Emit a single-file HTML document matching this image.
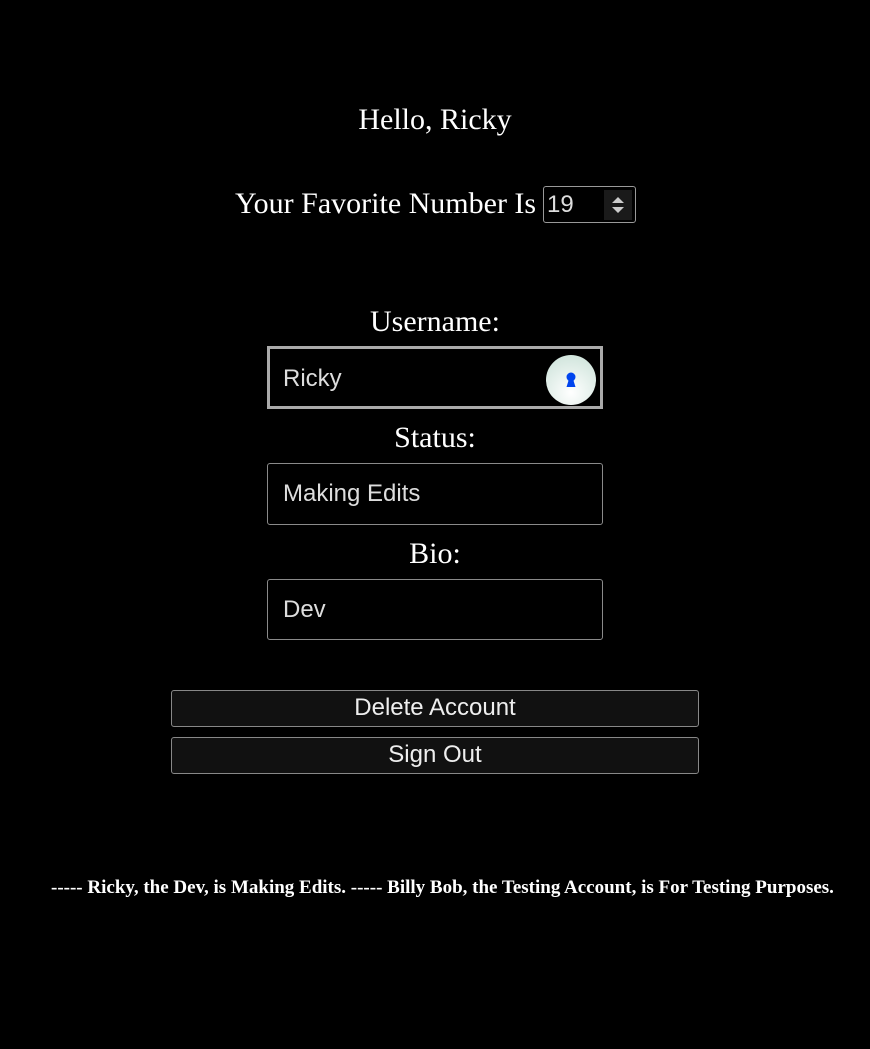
<!DOCTYPE html>
<html><head><style>
body{margin:0;background:#000;width:870px;height:1049px;position:relative;font-family:"Liberation Serif",serif;color:#fff;overflow:hidden}
.t{position:absolute;left:0;width:870px;text-align:center;white-space:nowrap}
.box{position:absolute;left:267px;width:336px;height:60px;border:1px solid #8a8a8a;border-radius:3px;box-sizing:border-box;font-family:"Liberation Sans",sans-serif;font-size:24px;color:#ddd;padding-left:15px;line-height:60px}
.btn{position:absolute;left:171px;width:528px;height:37px;background:#111;border:1px solid #888;border-radius:3px;box-sizing:border-box;font-family:"Liberation Sans",sans-serif;font-size:24px;text-align:center;line-height:33px;color:#eee}
</style></head><body>
<div class="t" style="top:103px;font-size:30px">Hello, Ricky</div>
<div style="position:absolute;left:235px;top:187px;font-size:30px;white-space:nowrap">Your Favorite Number Is</div>
<div style="position:absolute;left:543px;top:186px;width:93px;height:37px;border:1px solid #999;border-radius:3px;box-sizing:border-box;font-family:'Liberation Sans',sans-serif;font-size:24px;line-height:36px;padding-left:3px;color:#ddd">19
<div style="position:absolute;right:3px;top:3px;width:28px;height:30px;background:#1a1a1a"><svg width="28" height="30"><path d="M8 13 L14 7 L20 13Z M8 17 L14 23 L20 17Z" fill="#ccc"/></svg></div></div>
<div class="t" style="top:305px;font-size:30px">Username:</div>
<div class="box" style="top:346px;height:63px;border:3px solid #aaa;border-radius:0;padding-left:13px;line-height:60px">Ricky
<div style="position:absolute;right:4px;top:6px;width:50px;height:50px;border-radius:50%;background:radial-gradient(circle at 50% 75%,#fff,#c8e0d6)"><svg width="50" height="50"><circle cx="25" cy="22" r="4.5" fill="#0044ee"/><path d="M23 24 L20.5 32 L29.5 32 L27 24Z" fill="#0044ee"/></svg></div></div>
<div class="t" style="top:421px;font-size:30px">Status:</div>
<div class="box" style="top:463px;height:62px">Making Edits</div>
<div class="t" style="top:537px;font-size:30px">Bio:</div>
<div class="box" style="top:579px;height:61px">Dev</div>
<div class="btn" style="top:690px">Delete Account</div>
<div class="btn" style="top:737px">Sign Out</div>
<div style="position:absolute;left:51px;top:877px;font-size:19px;font-weight:bold;white-space:nowrap">----- Ricky, the Dev, is Making Edits. ----- Billy Bob, the Testing Account, is For Testing Purposes.</div>
</body></html>
